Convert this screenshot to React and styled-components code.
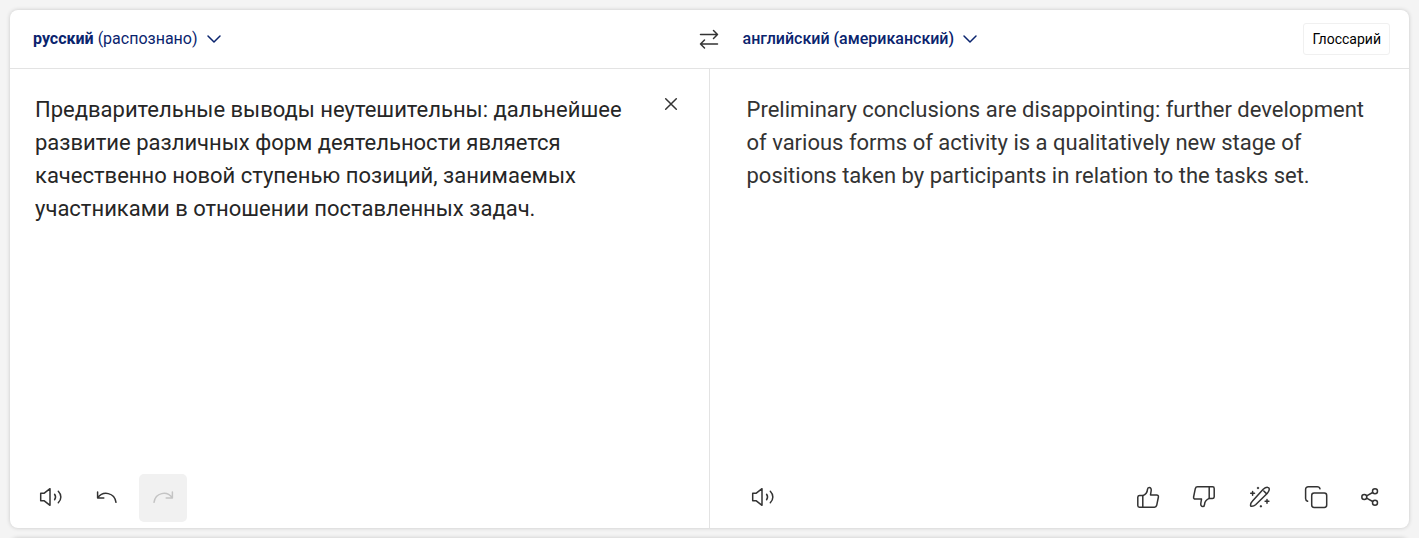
import React, { useState } from 'react'
import styled, { createGlobalStyle } from 'styled-components'

const GlobalStyle = createGlobalStyle`
    * {
        box-sizing: border-box;
    }
    body {
        margin: 0;
        background: #f4f4f4;
        color: #333;
        font-family: Roboto, "Liberation Sans", sans-serif;
    }
    button, textarea {
        font-family: inherit;
        color: inherit;
    }
`

const Page = styled.main`
    height: 100vh;
    padding: 10px 10px 0;
    display: flex;
    flex-direction: column;
    gap: 10px;
    overflow: hidden;
`

const Card = styled.section`
    flex: 1;
    display: flex;
    flex-direction: column;
    background: #fff;
    border-radius: 8px;
    box-shadow: 0 0 4px rgba(0, 0, 0, 0.18);
`

const NextCard = styled(Card)`
    flex: none;
    height: 40px;
    margin-bottom: -40px;
`

const Header = styled.header`
    display: grid;
    grid-template-columns: 1fr 1fr;
    height: 59px;
    border-bottom: 1px solid #e3e3e3;
`

const HeaderSide = styled.div`
    display: flex;
    align-items: center;
    justify-content: space-between;
    padding: ${props => (props.$target ? '0 19px 0 33px' : '0 0 0 23px')};
`

const LangButton = styled.button`
    display: flex;
    align-items: center;
    gap: 8px;
    padding: 0;
    border: none;
    background: none;
    color: #0a246e;
    font-size: 16px;
    line-height: 24px;
    white-space: nowrap;
    cursor: pointer;

    strong {
        font-weight: ${props => (props.$detected ? 700 : 500)};
    }
`

const SwapButton = styled.button`
    display: flex;
    align-items: center;
    justify-content: center;
    width: 32px;
    height: 32px;
    margin-right: -15px;
    padding: 0;
    border: none;
    background: none;
    cursor: pointer;
`

const GlossaryButton = styled.button`
    height: 32px;
    padding: 0 8px;
    border: 1px solid #f0f0f0;
    border-radius: 3px;
    background: #fff;
    color: #000;
    font-size: 14px;
    cursor: pointer;
`

const Panels = styled.div`
    flex: 1;
    display: grid;
    grid-template-columns: 1fr 1fr;
`

const Panel = styled.div`
    display: flex;
    flex-direction: column;
    border-right: ${props => (props.$target ? 'none' : '1px solid #e3e3e3')};
`

const TextRow = styled.div`
    flex: 1;
    display: flex;
    align-items: flex-start;
    padding: ${props => (props.$target ? '24px 32px 0 37px' : '24px 22px 0 25px')};
`

const SourceText = styled.textarea`
    flex: 1;
    align-self: stretch;
    padding: 0;
    border: none;
    outline: none;
    resize: none;
    background: none;
    color: #262626;
    font-size: 22px;
    line-height: 33px;
`

const TargetText = styled.p`
    flex: 1;
    margin: 0;
    font-size: 22px;
    line-height: 33px;
`

const ClearButton = styled.button`
    display: flex;
    align-items: center;
    justify-content: center;
    width: 32px;
    height: 22px;
    padding: 0;
    border: none;
    background: none;
    cursor: pointer;
`

const Toolbar = styled.div`
    display: flex;
    gap: 8px;
    padding: ${props => (props.$target ? '0 17px 6px 29px' : '0 16px 6px 17px')};
`

const ToolButton = styled.button`
    display: flex;
    align-items: center;
    justify-content: center;
    width: ${props => (props.$narrow ? 44 : 48)}px;
    height: 48px;
    padding: 0 0 2px;
    border: none;
    border-radius: 5px;
    background: none;
    cursor: pointer;

    &:disabled {
        background: #f1f1f1;
        color: #c4c4c4;
        cursor: default;
    }
`

const Spacer = styled.div`
    flex: 1;
`

const Icon = ({ size = 24, children }) => (
    <svg
        width={size}
        height={size}
        viewBox={`0 0 ${size} ${size}`}
        fill="none"
        stroke="currentColor"
        strokeWidth="1.5"
        strokeLinecap="round"
        strokeLinejoin="round"
        aria-hidden="true"
    >
        {children}
    </svg>
)

const ChevronIcon = () => (
    <Icon size={16}>
        <path d="M2 5l6 6 6-6" />
    </Icon>
)

const SwapIcon = () => (
    <Icon>
        <path d="M3.5 7.5h17M16.5 3.5l4 4-4 4M20.5 17h-17M7.5 13l-4 4 4 4" />
    </Icon>
)

const CloseIcon = () => (
    <Icon size={16}>
        <path d="M2.7 2.7l10.6 10.6M13.3 2.7L2.7 13.3" />
    </Icon>
)

const SpeakerIcon = () => (
    <Icon>
        <path d="M1.7 8.2h3.6l5.7-4.5v16.6l-5.7-4.5H1.7z" />
        <path d="M15.6 9.3c1.2 1.7 1.2 3.7 0 5.4M19.3 6.2c3.4 3.4 3.4 8.2 0 11.6" />
    </Icon>
)

const UndoIcon = () => (
    <Icon>
        <path d="M2.6 7v6h6.2M2.8 12.8C8 5.5 19.5 7.5 21 17.3" />
    </Icon>
)

const RedoIcon = () => (
    <Icon>
        <path d="M21.4 7v6h-6.2M21.2 12.8C16 5.5 4.5 7.5 3 17.3" />
    </Icon>
)

const ThumbPaths = () => (
    <>
        <path d="M6.8 10.6H3.6c-1 0-1.7.7-1.8 1.6v8.4c0 .9.6 1.6 1.6 1.6h3.4z" />
        <path d="M6.8 10.6c2.6-1 4.5-3 4.7-6.2.1-1.4.7-2 1.7-2 1.5 0 2.2 1.4 2 3.1l-.7 4.4h6.1c1.3 0 2 .9 1.8 2.1l-1.7 8.3c-.3 1.2-1 1.9-2.2 1.9H6.8" />
    </>
)

const LikeIcon = () => (
    <Icon>
        <ThumbPaths />
    </Icon>
)

const DislikeIcon = () => (
    <Icon>
        <g transform="rotate(180 12 12)">
            <ThumbPaths />
        </g>
    </Icon>
)

const WandIcon = () => (
    <Icon>
        <path d="M15.2 4.2c1.5-1.3 3-2 4.6-1.8 1 .1 1.5.8 1.5 1.7 0 1.5-.7 2.9-1.9 4.1L7.6 19.7c-1.3 1.2-2.6 1.7-4.1 1.6-.7 0-1-.4-1-1.1 0-1.5.6-2.8 1.8-4zM15.8 6l2.4 2.4" />
        <path d="M4.6 6.4v3.8M2.7 8.3h3.8M19 14.4v3.8M17.1 16.3h3.8" />
        <path d="M10 2.6v1M9.5 3.1h1M12.9 20.7v1M12.4 21.2h1" />
    </Icon>
)

const CopyIcon = () => (
    <Icon>
        <rect x="7.7" y="8" width="15" height="14.5" rx="2.4" />
        <path d="M3.6 16.2c-1.3-.4-2-1.3-2-2.7V4.6c0-1.8 1-2.8 2.8-2.8h8.8c1.6 0 2.5.7 2.8 2" />
    </Icon>
)

const ShareIcon = () => (
    <Icon>
        <circle cx="6.3" cy="12" r="2.5" />
        <circle cx="17" cy="6.3" r="2.5" />
        <circle cx="17" cy="17.7" r="2.5" />
        <path d="M8.6 10.8l6.1-3.3M8.6 13.2l6.1 3.3" />
    </Icon>
)

const App = () => {
    const [text, setText] = useState(
        'Предварительные выводы неутешительны: дальнейшее развитие различных форм деятельности является качественно новой ступенью позиций, занимаемых участниками в отношении поставленных задач.'
    )

    return (
        <>
            <GlobalStyle />
            <Page>
                <Card>
                    <Header>
                        <HeaderSide>
                            <LangButton $detected>
                                <span><strong>русский</strong> (распознано)</span>
                                <ChevronIcon />
                            </LangButton>
                            <SwapButton aria-label="Поменять языки местами">
                                <SwapIcon />
                            </SwapButton>
                        </HeaderSide>
                        <HeaderSide $target>
                            <LangButton>
                                <strong>английский (американский)</strong>
                                <ChevronIcon />
                            </LangButton>
                            <GlossaryButton>Глоссарий</GlossaryButton>
                        </HeaderSide>
                    </Header>
                    <Panels>
                        <Panel>
                            <TextRow>
                                <SourceText
                                    aria-label="Исходный текст"
                                    spellCheck={false}
                                    value={text}
                                    onChange={e => setText(e.target.value)}
                                />
                                <ClearButton aria-label="Очистить" onClick={() => setText('')}>
                                    <CloseIcon />
                                </ClearButton>
                            </TextRow>
                            <Toolbar>
                                <ToolButton aria-label="Прослушать оригинал"><SpeakerIcon /></ToolButton>
                                <ToolButton aria-label="Отменить"><UndoIcon /></ToolButton>
                                <ToolButton aria-label="Повторить" disabled><RedoIcon /></ToolButton>
                            </Toolbar>
                        </Panel>
                        <Panel $target>
                            <TextRow $target>
                                <TargetText lang="en">
                                    Preliminary conclusions are disappointing: further development of various forms of activity is a qualitatively new stage of positions taken by participants in relation to the tasks set.
                                </TargetText>
                            </TextRow>
                            <Toolbar $target>
                                <ToolButton aria-label="Прослушать перевод"><SpeakerIcon /></ToolButton>
                                <Spacer />
                                <ToolButton aria-label="Хороший перевод"><LikeIcon /></ToolButton>
                                <ToolButton aria-label="Плохой перевод"><DislikeIcon /></ToolButton>
                                <ToolButton aria-label="Улучшить"><WandIcon /></ToolButton>
                                <ToolButton aria-label="Копировать"><CopyIcon /></ToolButton>
                                <ToolButton $narrow aria-label="Поделиться"><ShareIcon /></ToolButton>
                            </Toolbar>
                        </Panel>
                    </Panels>
                </Card>
                <NextCard />
            </Page>
        </>
    )
}

export default App
